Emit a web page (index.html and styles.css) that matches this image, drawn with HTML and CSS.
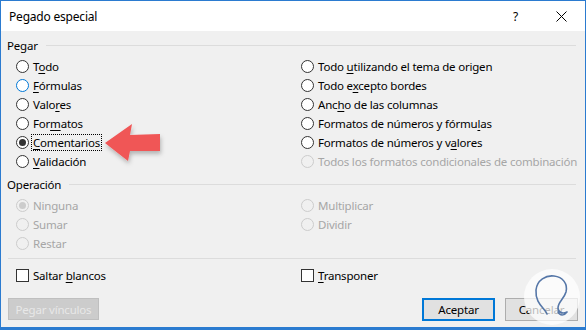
FILE: index.html
```html
<!DOCTYPE html>
<html lang="es">
<head>
  <meta charset="UTF-8" />
  <title>Pegado especial</title>
  <link rel="stylesheet" href="styles.css">
</head>
<body>
  <div class="window">
    <div class="titlebar">
      <span class="title">Pegado especial</span>
      <span class="help">?</span>
      <svg class="close" width="11" height="11" viewBox="0 0 11 11">
        <path d="M0.5 0.5 L10.5 10.5 M10.5 0.5 L0.5 10.5" stroke="#000" stroke-width="1" />
      </svg>
    </div>

    <div class="content">
      <div class="group-head"><span>Pegar</span><div class="rule"></div></div>
      <div class="options">
        <label class="opt"><span class="radio"></span><span>T<u>o</u>do</span></label>
        <label class="opt"><span class="radio"></span><span>Todo <u>u</u>tilizando el tema de origen</span></label>
        <label class="opt"><span class="radio hover"></span><span><u>F</u>órmulas</span></label>
        <label class="opt"><span class="radio"></span><span>Todo e<u>x</u>cepto bordes</span></label>
        <label class="opt"><span class="radio"></span><span>Valo<u>r</u>es</span></label>
        <label class="opt"><span class="radio"></span><span>Anc<u>h</u>o de las columnas</span></label>
        <label class="opt"><span class="radio"></span><span>For<u>m</u>atos</span></label>
        <label class="opt"><span class="radio"></span><span>Formatos de números y fórmu<u>l</u>as</span></label>
        <label class="opt"><span class="radio checked"></span><span class="focus"><u>C</u>omentarios</span></label>
        <label class="opt"><span class="radio"></span><span>Formatos de números y v<u>a</u>lores</span></label>
        <label class="opt"><span class="radio"></span><span><u>V</u>alidación</span></label>
        <label class="opt disabled"><span class="radio"></span><span>Todos los formatos condicionales de combinación</span></label>
      </div>

      <div class="group-head op"><span>Operación</span><div class="rule"></div></div>
      <div class="options">
        <label class="opt disabled"><span class="radio checked"></span><span>Ninguna</span></label>
        <label class="opt disabled"><span class="radio"></span><span>Multiplicar</span></label>
        <label class="opt disabled"><span class="radio"></span><span>Sumar</span></label>
        <label class="opt disabled"><span class="radio"></span><span>Dividir</span></label>
        <label class="opt disabled"><span class="radio"></span><span>Restar</span></label>
      </div>

      <div class="separator"></div>

      <div class="options checks">
        <label class="opt"><span class="checkbox"></span><span>Saltar <u>b</u>lancos</span></label>
        <label class="opt"><span class="checkbox"></span><span><u>T</u>ransponer</span></label>
      </div>

      <div class="footer">
        <button class="btn btn-disabled">Pegar vínculos</button>
        <div class="footer-right">
          <button class="btn btn-default">Aceptar</button>
          <button class="btn">Cancelar</button>
        </div>
      </div>
    </div>

    <svg class="arrow" width="70" height="52" viewBox="0 0 70 52">
      <defs>
        <filter id="sombra" x="-20%" y="-20%" width="150%" height="160%">
          <feDropShadow dx="1" dy="3" stdDeviation="2" flood-color="#000" flood-opacity="0.25" />
        </filter>
      </defs>
      <polygon points="3,21 30,2 28,13 58,12 58,29 28,29 26,39" fill="#f05656" filter="url(#sombra)" />
    </svg>

    <svg class="watermark" width="58" height="58" viewBox="0 0 58 58">
      <circle cx="29" cy="29" r="28" fill="rgba(255,255,255,0.72)" />
      <path d="M24 46 C22 40 12 36 13 22 C14 12 23 7 31 8 C40 9 45 16 43 24 C41 31 35 34 35 40 C35 45 40 46 44 44 M35 44 C37 48 41 48 44 44"
            fill="none" stroke="#5677a8" stroke-width="1.6" stroke-linecap="round" />
    </svg>
  </div>
</body>
</html>
```

FILE: styles.css
```css
html, body {
  margin: 0;
  padding: 0;
  font-family: "Noto Sans", Arial, sans-serif;
  font-size: 11.5px;
  letter-spacing: -0.2px;
  color: #000;
}

.window {
  position: relative;
  width: 586px;
  height: 330px;
  box-sizing: border-box;
  border: 1px solid #2b7bd0;
  border-bottom-width: 3px;
  background: #f0f0f0;
  overflow: hidden;
}

.titlebar {
  height: 30px;
  background: #fff;
  display: flex;
  align-items: center;
  padding-left: 8px;
}

.title {
  flex: 1;
  font-size: 12px;
}

.help {
  font-size: 12px;
  margin-right: 38px;
}

.close {
  margin-right: 18px;
}

.content {
  padding: 6px 7px 0 6px;
}

.group-head {
  display: flex;
  align-items: center;
  height: 16px;
  margin-bottom: 4px;
}

.group-head .rule {
  flex: 1;
  height: 1px;
  background: #dcdcdc;
  margin-left: 8px;
  margin-right: 2px;
}

.group-head.op {
  margin-top: 5px;
}

.options {
  display: grid;
  grid-template-columns: 285px 1fr;
  padding-left: 9px;
}

.opt {
  display: flex;
  align-items: center;
  height: 19px;
  white-space: nowrap;
}

.opt u {
  text-decoration-thickness: 1px;
  text-underline-offset: 2px;
}

.radio {
  width: 11px;
  height: 11px;
  border: 1px solid #333;
  border-radius: 50%;
  background: #fff;
  margin-right: 4px;
  position: relative;
  flex-shrink: 0;
}

.radio.hover {
  border-color: #0078d7;
}

.radio.checked::after {
  content: "";
  position: absolute;
  left: 2px;
  top: 2px;
  width: 7px;
  height: 7px;
  border-radius: 50%;
  background: #333;
}

.disabled {
  color: #a6a6a6;
}

.disabled .radio {
  border-color: #cccccc;
  background: #f0f0f0;
}

.disabled .radio.checked::after {
  background: #cccccc;
}

.focus {
  outline: 1px dotted #000;
  outline-offset: 0;
  padding: 0 1px;
  margin-left: -1px;
}

.separator {
  height: 1px;
  background: #dcdcdc;
  margin: 5px 2px 6px 1px;
}

.checks .opt {
  height: 20px;
}

.checkbox {
  width: 11px;
  height: 11px;
  border: 1px solid #333;
  background: #fff;
  margin-right: 4px;
  flex-shrink: 0;
}

.footer {
  display: flex;
  justify-content: space-between;
  margin-top: 13px;
  padding-left: 1px;
}

.footer-right {
  display: flex;
  gap: 10px;
}

.btn {
  font-family: "Noto Sans", Arial, sans-serif;
  font-size: 11.5px;
  letter-spacing: -0.2px;
  width: 73px;
  height: 23px;
  padding: 0;
  background: #e1e1e1;
  border: 1px solid #adadad;
  color: #000;
}

.btn-default {
  border: 2px solid #0078d7;
}

.btn-disabled {
  width: 91px;
  height: 22px;
  background: #cccccc;
  border-color: #bfbfbf;
  color: #e8e8e8;
}

.arrow {
  position: absolute;
  left: 101px;
  top: 121px;
}

.watermark {
  position: absolute;
  left: 522px;
  top: 267px;
}
```
